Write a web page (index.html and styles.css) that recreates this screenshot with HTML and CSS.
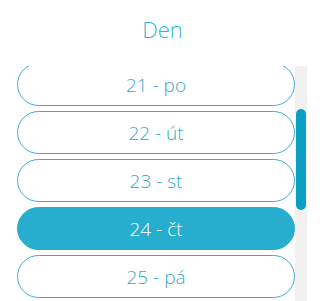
FILE: index.html
```html
<!DOCTYPE html>
<html lang="cs">
<head>
<meta charset="utf-8">
<title>Den</title>
<link rel="stylesheet" href="styles.css">
</head>
<body>
<div class="picker">
  <h2 class="picker-title">Den</h2>
  <div class="list-wrap">
    <div class="list" id="dayList">
      <button class="day">19 - so</button>
      <button class="day">20 - ne</button>
      <button class="day">21 - po</button>
      <button class="day">22 - út</button>
      <button class="day">23 - st</button>
      <button class="day selected">24 - čt</button>
      <button class="day">25 - pá</button>
      <button class="day">26 - so</button>
      <button class="day">27 - ne</button>
      <button class="day">28 - po</button>
      <button class="day">29 - út</button>
    </div>
    <div class="scroll-track" id="track">
      <div class="scroll-thumb" id="thumb"></div>
    </div>
  </div>
</div>
<script src="script.js"></script>
</body>
</html>
```
FILE: styles.css
```css
html, body {
  margin: 0;
  padding: 0;
  background: #ffffff;
  font-family: "Open Sans", "Liberation Sans", sans-serif;
}
.picker {
  width: 325px;
  height: 301px;
  display: flex;
  flex-direction: column;
  overflow: hidden;
}
.picker-title {
  margin: 0;
  padding-top: 14px;
  height: 30px;
  line-height: 30px;
  font-size: 22px;
  font-weight: 300;
  color: #2ab6d7;
  text-align: center;
  margin-bottom: 22px;
}
.list-wrap {
  flex: 1;
  min-height: 0;
  padding: 0 18px 0 17px;
  display: flex;
}
.list {
  flex: 1;
  overflow: hidden;
  display: flex;
  flex-direction: column;
  gap: 5px;
  padding-bottom: 24px;
}
.scroll-track {
  flex: 0 0 12px;
  background: #f1f1f1;
  display: flex;
  flex-direction: column;
}
.scroll-thumb {
  margin: 0 1px;
  background: #0a9fc3;
  border-radius: 5px;
}
.day {
  flex: 0 0 auto;
  height: 43px;
  margin: 0;
  padding: 0;
  border: 1px solid #3aaccb;
  border-radius: 22px;
  background: #ffffff;
  color: #38a8c6;
  font-family: "Open Sans", "Liberation Sans", sans-serif;
  font-size: 19px;
  font-weight: 300;
  text-align: center;
}
.day.selected {
  background: #27adce;
  border-color: #27adce;
  color: #ffffff;
}
```
FILE: script.js
```js
var list = document.getElementById('dayList');
var thumb = document.getElementById('thumb');
list.scrollTop = 99;
var view = list.clientHeight;
var total = list.scrollHeight;
thumb.style.height = Math.round(view * view / total) + 'px';
thumb.style.marginTop = Math.round(list.scrollTop / total * view) + 'px';
```
